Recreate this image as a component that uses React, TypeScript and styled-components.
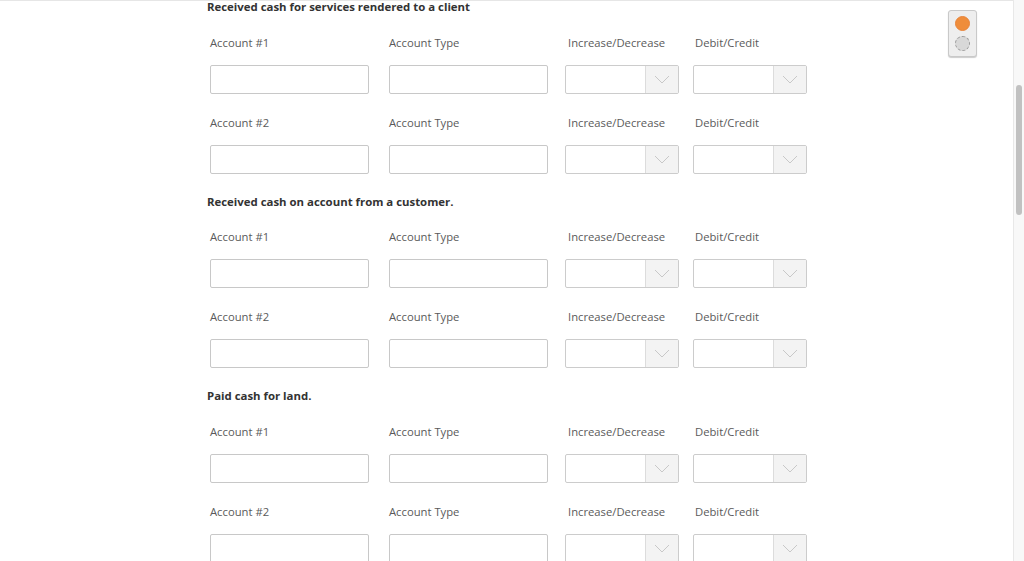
import styled, { createGlobalStyle } from "styled-components";

const GlobalStyle = createGlobalStyle`
  html, body {
    margin: 0;
    padding: 0;
    background: #ffffff;
    overflow: hidden;
  }
  * {
    box-sizing: border-box;
  }
`;

const Page = styled.div`
  width: 1024px;
  height: 561px;
  display: flex;
  font-family: "Open Sans", "Liberation Sans", sans-serif;
  overflow: hidden;
`;

const Main = styled.div`
  position: relative;
  flex: 1;
  height: 100%;
  border-top: 1px solid #e6e6e6;
  padding-left: 207px;
  overflow: hidden;
`;

const Content = styled.div`
  margin-top: -1px;
`;

const ScrollTrack = styled.div`
  width: 11px;
  height: 100%;
  background: #f8f8f8;
  border-left: 1px solid #e8e8e8;
  padding: 85px 2px 0 2px;
`;

const ScrollThumb = styled.div`
  width: 6px;
  height: 130px;
  margin: 0 auto;
  border-radius: 3px;
  background: #c1c1c1;
`;

const Section = styled.section`
  display: flex;
  flex-direction: column;
`;

const Heading = styled.div`
  font-size: 11.4px;
  line-height: 14px;
  font-weight: 700;
  color: #333333;
  margin-bottom: 20.5px;
`;

const Row = styled.div`
  display: flex;
  padding-left: 3px;
  margin-bottom: 21px;
`;

const Field = styled.div<{ $width: number; $gap: number; $labelPad?: number }>`
  display: flex;
  flex-direction: column;
  width: ${(p) => p.$width}px;
  margin-right: ${(p) => p.$gap}px;
  & > span {
    font-size: 11.25px;
    line-height: 16px;
    color: #5a5a5a;
    padding-left: ${(p) => p.$labelPad ?? 0}px;
    margin-bottom: 14px;
    white-space: nowrap;
  }
`;

const TextBox = styled.div`
  height: 29px;
  border: 1px solid #c8c8c8;
  border-radius: 2px;
  background: #ffffff;
`;

const SelectBox = styled.div`
  height: 29px;
  display: flex;
  border: 1px solid #cccccc;
  border-radius: 2px;
  background: #ffffff;
  overflow: hidden;
`;

const SelectValue = styled.div`
  flex: 1;
`;

const SelectArrow = styled.div`
  width: 33px;
  display: flex;
  align-items: center;
  justify-content: center;
  background: #f3f3f3;
  border-left: 1px solid #dcdcdc;
`;

const Widget = styled.div`
  position: absolute;
  top: 9px;
  right: 36px;
  width: 29px;
  height: 47px;
  display: flex;
  flex-direction: column;
  align-items: center;
  gap: 5px;
  padding-top: 5px;
  background: #eeeeee;
  border: 1px solid #c9c9c9;
  border-radius: 3px;
  box-shadow: 0 1px 1px rgba(0, 0, 0, 0.2);
`;

const Dot = styled.div<{ $on?: boolean }>`
  width: 15px;
  height: 15px;
  border-radius: 50%;
  background: ${(p) => (p.$on ? "#ef8d3b" : "#d8d8d8")};
  border: 1px ${(p) => (p.$on ? "solid #e8843a" : "dashed #9a9a9a")};
`;

function Chevron() {
  return (
    <svg width="16" height="9" viewBox="0 0 16 9">
      <path d="M1 1 L8 8 L15 1" fill="none" stroke="#c8c8c8" strokeWidth="1" />
    </svg>
  );
}

function Select() {
  return (
    <SelectBox>
      <SelectValue />
      <SelectArrow>
        <Chevron />
      </SelectArrow>
    </SelectBox>
  );
}

function EntryRow({ n }: { n: number }) {
  return (
    <Row>
      <Field $width={159} $gap={20}>
        <span>Account #{n}</span>
        <TextBox />
      </Field>
      <Field $width={159} $gap={17}>
        <span>Account Type</span>
        <TextBox />
      </Field>
      <Field $width={114} $gap={14} $labelPad={3}>
        <span>Increase/Decrease</span>
        <Select />
      </Field>
      <Field $width={114} $gap={0} $labelPad={2}>
        <span>Debit/Credit</span>
        <Select />
      </Field>
    </Row>
  );
}

const transactions = [
  "Received cash for services rendered to a client",
  "Received cash on account from a customer.",
  "Paid cash for land.",
];

export default function App() {
  return (
    <>
      <GlobalStyle />
      <Page>
        <Main>
          <Content>
            {transactions.map((t) => (
              <Section key={t}>
                <Heading>{t}</Heading>
                <EntryRow n={1} />
                <EntryRow n={2} />
              </Section>
            ))}
          </Content>
          <Widget>
            <Dot $on />
            <Dot />
          </Widget>
        </Main>
        <ScrollTrack>
          <ScrollThumb />
        </ScrollTrack>
      </Page>
    </>
  );
}
